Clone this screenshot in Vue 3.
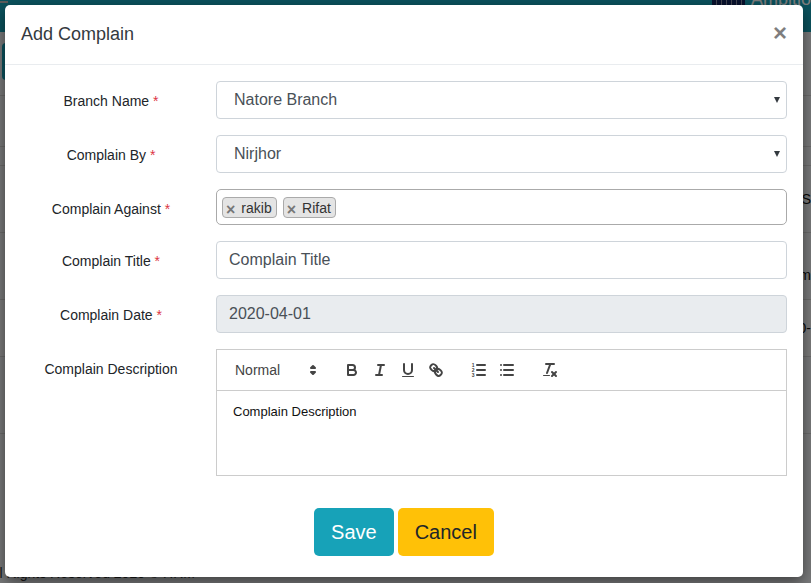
<template>
  <div class="page">
    <header class="topbar">
      <span class="menu-icon"></span>
      <div class="user">
        <span class="user-logo"></span>
        <span class="user-name">Ambitious</span>
      </div>
    </header>
    <div class="content">
      <div class="tab"></div>
      <div class="bg-row first"></div>
      <div class="bg-row second"></div>
      <div class="bg-row head"><span>S</span></div>
      <div class="bg-row name"><span>m</span></div>
      <div class="bg-row date"><span>0-</span></div>
      <div class="bg-row tall"></div>
      <div class="bg-row last"></div>
    </div>
    <footer class="foot">All Rights Reserved 2020 © HRM</footer>
    <div class="backdrop"></div>

    <div class="modal">
      <div class="modal-header">
        <h5>Add Complain</h5>
        <span class="close">×</span>
      </div>
      <form class="modal-body" @submit.prevent>
        <div class="row">
          <label>Branch Name <i>*</i></label>
          <div class="select-wrap">
            <select class="control select">
              <option>Natore Branch</option>
            </select>
            <span class="caret"></span>
          </div>
        </div>
        <div class="row">
          <label>Complain By <i>*</i></label>
          <div class="select-wrap">
            <select class="control select">
              <option>Nirjhor</option>
            </select>
            <span class="caret"></span>
          </div>
        </div>
        <div class="row">
          <label class="low">Complain Against <i>*</i></label>
          <div class="tags">
            <span v-for="tag in tags" :key="tag" class="tag"><b>×</b>{{ tag }}</span>
          </div>
        </div>
        <div class="row">
          <label>Complain Title <i>*</i></label>
          <input class="control" type="text" placeholder="Complain Title" />
        </div>
        <div class="row">
          <label>Complain Date <i>*</i></label>
          <input class="control" type="text" value="2020-04-01" disabled />
        </div>
        <div class="row editor-row">
          <label>Complain Description</label>
          <div class="editor">
            <div class="toolbar">
              <span class="picker">
                Normal
                <svg viewBox="0 0 18 18"><polygon points="7 11 9 13 11 11" /><polygon points="7 7 9 5 11 7" /></svg>
              </span>
              <span class="group">
                <button type="button">
                  <svg viewBox="0 0 18 18">
                    <path d="M5,4H9.5A2.5,2.5,0,0,1,12,6.5v0A2.5,2.5,0,0,1,9.5,9H5V4Z" />
                    <path d="M5,9h5.5A2.5,2.5,0,0,1,13,11.5v0A2.5,2.5,0,0,1,10.5,14H5V9Z" />
                  </svg>
                </button>
                <button type="button">
                  <svg viewBox="0 0 18 18">
                    <line x1="7" x2="13" y1="4" y2="4" />
                    <line x1="5" x2="11" y1="14" y2="14" />
                    <line x1="8" x2="10" y1="14" y2="4" />
                  </svg>
                </button>
                <button type="button">
                  <svg viewBox="0 0 18 18">
                    <path d="M5,3V9a4.012,4.012,0,0,0,4,4H9a4.012,4.012,0,0,0,4-4V3" />
                    <rect class="fill" x="3" y="15" width="12" height="1" rx="0.5" />
                  </svg>
                </button>
                <button type="button">
                  <svg viewBox="0 0 18 18">
                    <line x1="7" x2="11" y1="7" y2="11" />
                    <path d="M8.9,4.577a3.476,3.476,0,0,1,.36,4.679A3.476,3.476,0,0,1,4.577,8.9C3.185,7.5,2.035,6.4,4.217,4.217S7.5,3.185,8.9,4.577Z" />
                    <path d="M13.423,9.1a3.476,3.476,0,0,0-4.679-.36,3.476,3.476,0,0,0,.36,4.679c1.392,1.392,2.5,2.542,4.679.36S14.815,10.5,13.423,9.1Z" />
                  </svg>
                </button>
              </span>
              <span class="group">
                <button type="button">
                  <svg viewBox="0 0 18 18">
                    <line x1="7" x2="15" y1="4" y2="4" />
                    <line x1="7" x2="15" y1="9" y2="9" />
                    <line x1="7" x2="15" y1="14" y2="14" />
                    <text class="num" x="1.8" y="6">1</text>
                    <text class="num" x="1.8" y="11">2</text>
                    <text class="num" x="1.8" y="16">3</text>
                  </svg>
                </button>
                <button type="button">
                  <svg viewBox="0 0 18 18">
                    <line x1="6" x2="15" y1="4" y2="4" />
                    <line x1="6" x2="15" y1="9" y2="9" />
                    <line x1="6" x2="15" y1="14" y2="14" />
                    <line x1="3" x2="3" y1="4" y2="4" />
                    <line x1="3" x2="3" y1="9" y2="9" />
                    <line x1="3" x2="3" y1="14" y2="14" />
                  </svg>
                </button>
              </span>
              <span class="group">
                <button type="button">
                  <svg viewBox="0 0 18 18">
                    <line x1="5" x2="13" y1="3" y2="3" />
                    <line x1="6" x2="9.35" y1="12" y2="3" />
                    <line x1="11" x2="15" y1="11" y2="15" />
                    <line x1="15" x2="11" y1="11" y2="15" />
                    <rect class="fill" x="2" y="14" width="7" height="1" rx="0.5" />
                  </svg>
                </button>
              </span>
            </div>
            <div class="editor-body">Complain Description</div>
          </div>
        </div>
        <div class="actions">
          <button type="submit" class="btn save">Save</button>
          <button type="button" class="btn cancel">Cancel</button>
        </div>
      </form>
    </div>
  </div>
</template>

<script setup>
const tags = ['rakib', 'Rifat']
</script>

<style>
html, body {
  margin: 0;
  overflow: hidden;
}
</style>

<style scoped>
.page {
  position: relative;
  width: 811px;
  height: 583px;
  overflow: hidden;
  background: #f4f6f9;
  font-family: "Liberation Sans", Arial, sans-serif;
  display: flex;
  flex-direction: column;
}

.topbar {
  height: 32px;
  background: #17a7bd;
  display: flex;
  justify-content: space-between;
  flex-shrink: 0;
}
.menu-icon {
  width: 8px;
  height: 2px;
  margin-top: 1px;
  background: #bbb;
}
.user {
  display: flex;
  align-items: flex-start;
  margin-top: -11px;
  margin-right: -2px;
  gap: 6px;
}
.user-logo {
  width: 33px;
  height: 17px;
  background: repeating-linear-gradient(90deg, #12245c 0 4px, #8a90a8 4px 5px);
}
.user-name {
  color: #fff;
  font-size: 18px;
  width: 62px;
  overflow: hidden;
}

.content {
  flex: 1;
  padding-top: 11px;
}
.tab {
  width: 30px;
  height: 37px;
  margin-left: 2px;
  background: #17a7bd;
  border-radius: 4px;
}
.bg-row {
  border-top: 1px solid #d8d8d8;
  display: flex;
  justify-content: flex-end;
  font-size: 14px;
  color: #111;
  align-items: center;
}
.first { height: 50px; margin-top: 15px; }
.second { height: 18px; }
.head { height: 66px; }
.name { height: 67px; padding-top: 18px; box-sizing: border-box; }
.date { height: 56px; background: #fbfbfb; }
.tall { height: 76px; }
.last { height: 118px; }

.foot {
  height: 20px;
  margin-left: -13px;
  padding-top: 1px;
  font-size: 14px;
  line-height: 20px;
  color: #333;
}

.backdrop {
  position: absolute;
  inset: 0;
  background: rgba(0, 0, 0, 0.5);
}

.modal {
  position: absolute;
  top: 5px;
  left: 5px;
  width: 798px;
  background: #fff;
  border-radius: 5px;
  box-shadow: 0 5px 15px rgba(0, 0, 0, 0.5);
  color: #212529;
  font-size: 14px;
}
.modal-header {
  height: 59px;
  padding: 0 16px;
  border-bottom: 1px solid #e9ecef;
  display: flex;
  justify-content: space-between;
  align-items: center;
}
.modal-header h5 {
  margin: 0;
  font-size: 18px;
  font-weight: 400;
  color: #343a40;
}
.close {
  margin-top: -4px;
  font-size: 24px;
  font-weight: 700;
  color: #000;
  opacity: 0.5;
}

.modal-body {
  padding: 16px 16px 21px;
}
.row {
  display: flex;
  align-items: center;
  margin-bottom: 16px;
}
.editor-row {
  align-items: flex-start;
}
.row label {
  width: 180px;
  margin-right: 15px;
  padding-top: 2px;
  flex-shrink: 0;
  text-align: center;
  color: #212529;
}
.row label.low {
  padding-top: 4px;
}
.editor-row label {
  margin-top: 10px;
}
.row label i {
  color: #dc3545;
  font-style: normal;
}
.control {
  width: 100%;
  height: 38px;
  box-sizing: border-box;
  padding: 6px 12px;
  border: 1px solid #ced4da;
  border-radius: 4px;
  background: #fff;
  color: #495057;
  font: 16px "Liberation Sans", Arial, sans-serif;
  outline: none;
}
.control::placeholder {
  color: #495057;
  opacity: 1;
}
.control:disabled {
  background: #e9ecef;
  opacity: 1;
}
.select-wrap {
  position: relative;
  flex: 1;
}
.select {
  display: block;
  appearance: none;
  padding: 4px 13px 6px 17px;
}
.caret {
  position: absolute;
  right: 7px;
  top: 16px;
  border-left: 3px solid transparent;
  border-right: 3px solid transparent;
  border-top: 6px solid #343a40;
  pointer-events: none;
}

.tags {
  flex: 1;
  height: 36px;
  box-sizing: border-box;
  padding: 7px 5px 0;
  border: 1px solid #aaa;
  border-radius: 5px;
  display: flex;
  align-items: flex-start;
  gap: 6px;
}
.tag {
  height: 21px;
  box-sizing: border-box;
  padding: 0 4px;
  border: 1px solid #aaa;
  border-radius: 4px;
  background: #e4e4e4;
  font-size: 14px;
  line-height: 18px;
  color: #333;
  display: flex;
  align-items: center;
}
.tag b {
  padding-top: 3px;
  margin-left: -1px;
  margin-right: 6px;
  color: #777;
  font-size: 16px;
  line-height: 19px;
}

.editor {
  flex: 1;
  border: 1px solid #ccc;
  box-sizing: border-box;
}
.toolbar {
  padding: 8px;
  border-bottom: 1px solid #ccc;
  display: flex;
  height: 24px;
}
.picker {
  width: 98px;
  margin-right: 15px;
  padding-left: 10px;
  box-sizing: border-box;
  display: flex;
  align-items: center;
  justify-content: space-between;
  color: #444;
  font-size: 14px;
  font-weight: 500;
}
.picker svg {
  width: 18px;
  height: 18px;
  margin-right: 1px;
}
.picker polygon {
  fill: #444;
  stroke: #444;
  stroke-width: 2;
  stroke-linejoin: round;
}
.group {
  display: flex;
  margin-right: 15px;
}
.group button {
  width: 28px;
  height: 24px;
  padding: 3px 5px;
  border: none;
  background: none;
}
.group svg {
  display: block;
  width: 18px;
  height: 18px;
  fill: none;
  stroke: #444;
  stroke-width: 2;
  stroke-linecap: round;
  stroke-linejoin: round;
}
.group .fill {
  fill: #444;
  stroke: none;
}
.group .num {
  fill: #444;
  stroke: none;
  font-size: 5px;
  font-weight: 700;
}
.editor-body {
  height: 84px;
  box-sizing: border-box;
  padding: 12px 16px;
  font-size: 13px;
  line-height: 18.46px;
  color: #111;
}

.actions {
  margin-top: 32px;
  display: flex;
  justify-content: center;
  gap: 4px;
}
.btn {
  height: 48px;
  padding: 0 16px;
  border: 1px solid transparent;
  border-radius: 5px;
  font: 20px "Liberation Sans", Arial, sans-serif;
}
.save {
  background: #17a2b8;
  color: #fff;
}
.cancel {
  background: #ffc107;
  color: #212529;
}
</style>
